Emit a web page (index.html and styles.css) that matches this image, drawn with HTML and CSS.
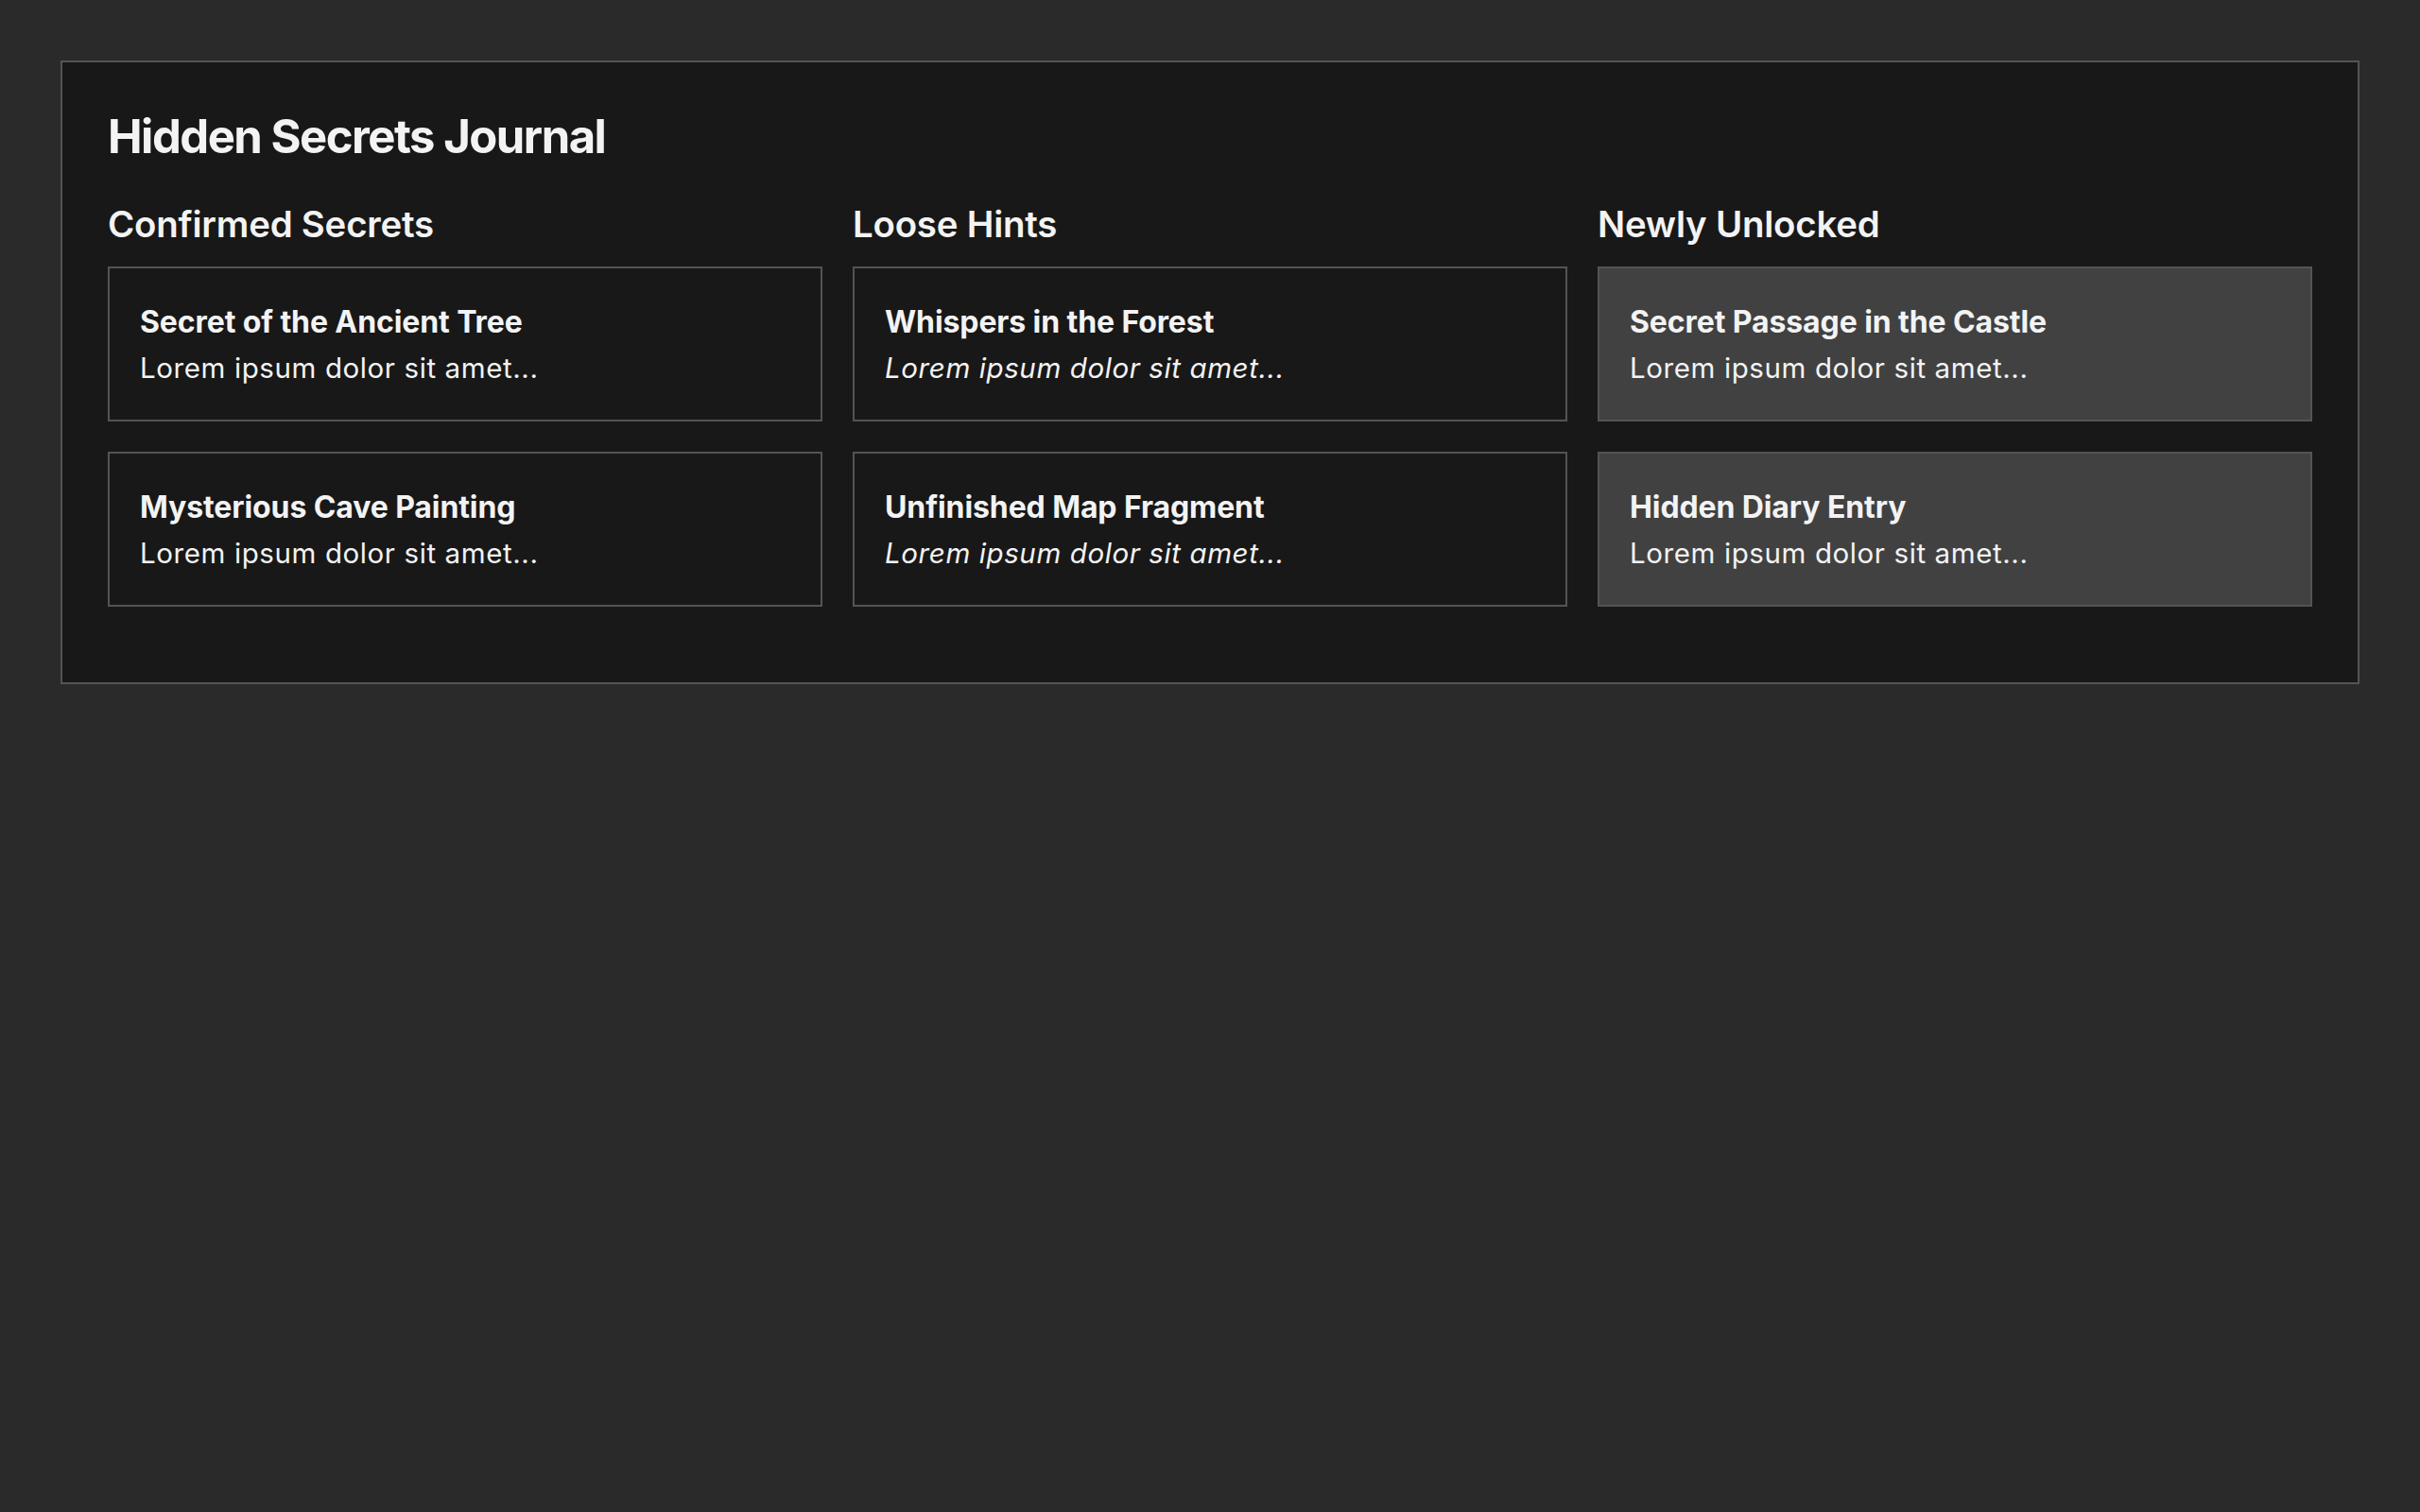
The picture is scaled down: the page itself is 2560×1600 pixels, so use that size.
FILE: index.html
```html
<!DOCTYPE html>
<html lang="en">
<head>
<meta charset="utf-8">
<title>Hidden Secrets Journal</title>
<link rel="stylesheet" href="styles.css">
</head>
<body>
<main class="journal">
  <h1 class="journal-title">Hidden Secrets Journal</h1>
  <div class="columns">
    <section class="column">
      <h2 class="column-title">Confirmed Secrets</h2>
      <article class="card">
        <h3 class="card-title">Secret of the Ancient Tree</h3>
        <p class="card-text">Lorem ipsum dolor sit amet...</p>
      </article>
      <article class="card">
        <h3 class="card-title">Mysterious Cave Painting</h3>
        <p class="card-text">Lorem ipsum dolor sit amet...</p>
      </article>
    </section>
    <section class="column">
      <h2 class="column-title">Loose Hints</h2>
      <article class="card card-hint">
        <h3 class="card-title">Whispers in the Forest</h3>
        <p class="card-text">Lorem ipsum dolor sit amet...</p>
      </article>
      <article class="card card-hint">
        <h3 class="card-title">Unfinished Map Fragment</h3>
        <p class="card-text">Lorem ipsum dolor sit amet...</p>
      </article>
    </section>
    <section class="column">
      <h2 class="column-title">Newly Unlocked</h2>
      <article class="card card-new">
        <h3 class="card-title">Secret Passage in the Castle</h3>
        <p class="card-text">Lorem ipsum dolor sit amet...</p>
      </article>
      <article class="card card-new">
        <h3 class="card-title">Hidden Diary Entry</h3>
        <p class="card-text">Lorem ipsum dolor sit amet...</p>
      </article>
    </section>
  </div>
</main>
</body>
</html>
```
FILE: styles.css
```css
* {
  box-sizing: border-box;
}

html, body {
  margin: 0;
  padding: 0;
}

body {
  background: #2a2a2a;
  color: #f3f3f3;
  font-family: Inter, "Noto Sans", "Liberation Sans", sans-serif;
  padding: 64px;
  min-height: 100vh;
}

.journal {
  background: #181818;
  border: 2px solid #545454;
  padding: 48px;
}

.journal-title {
  margin: 0 0 38px;
  font-size: 49px;
  line-height: 62px;
  font-weight: 700;
  letter-spacing: -1.5px;
}

.columns {
  display: grid;
  grid-template-columns: repeat(3, 1fr);
  gap: 32px;
}

.column-title {
  margin: 0 0 22px;
  font-size: 38.4px;
  line-height: 46px;
  font-weight: 600;
  letter-spacing: -0.2px;
}

.card {
  border: 2px solid #545454;
  padding: 31px 32px 32px;
  margin-bottom: 32px;
}

.card-title {
  margin: 0;
  font-size: 32px;
  line-height: 51px;
  font-weight: 700;
  letter-spacing: -0.1px;
}

.card-text {
  margin: 0;
  font-size: 29.5px;
  line-height: 46px;
  letter-spacing: 0.6px;
}

.card-hint .card-text {
  font-style: italic;
}

.card-new {
  background: #414141;
}
```
